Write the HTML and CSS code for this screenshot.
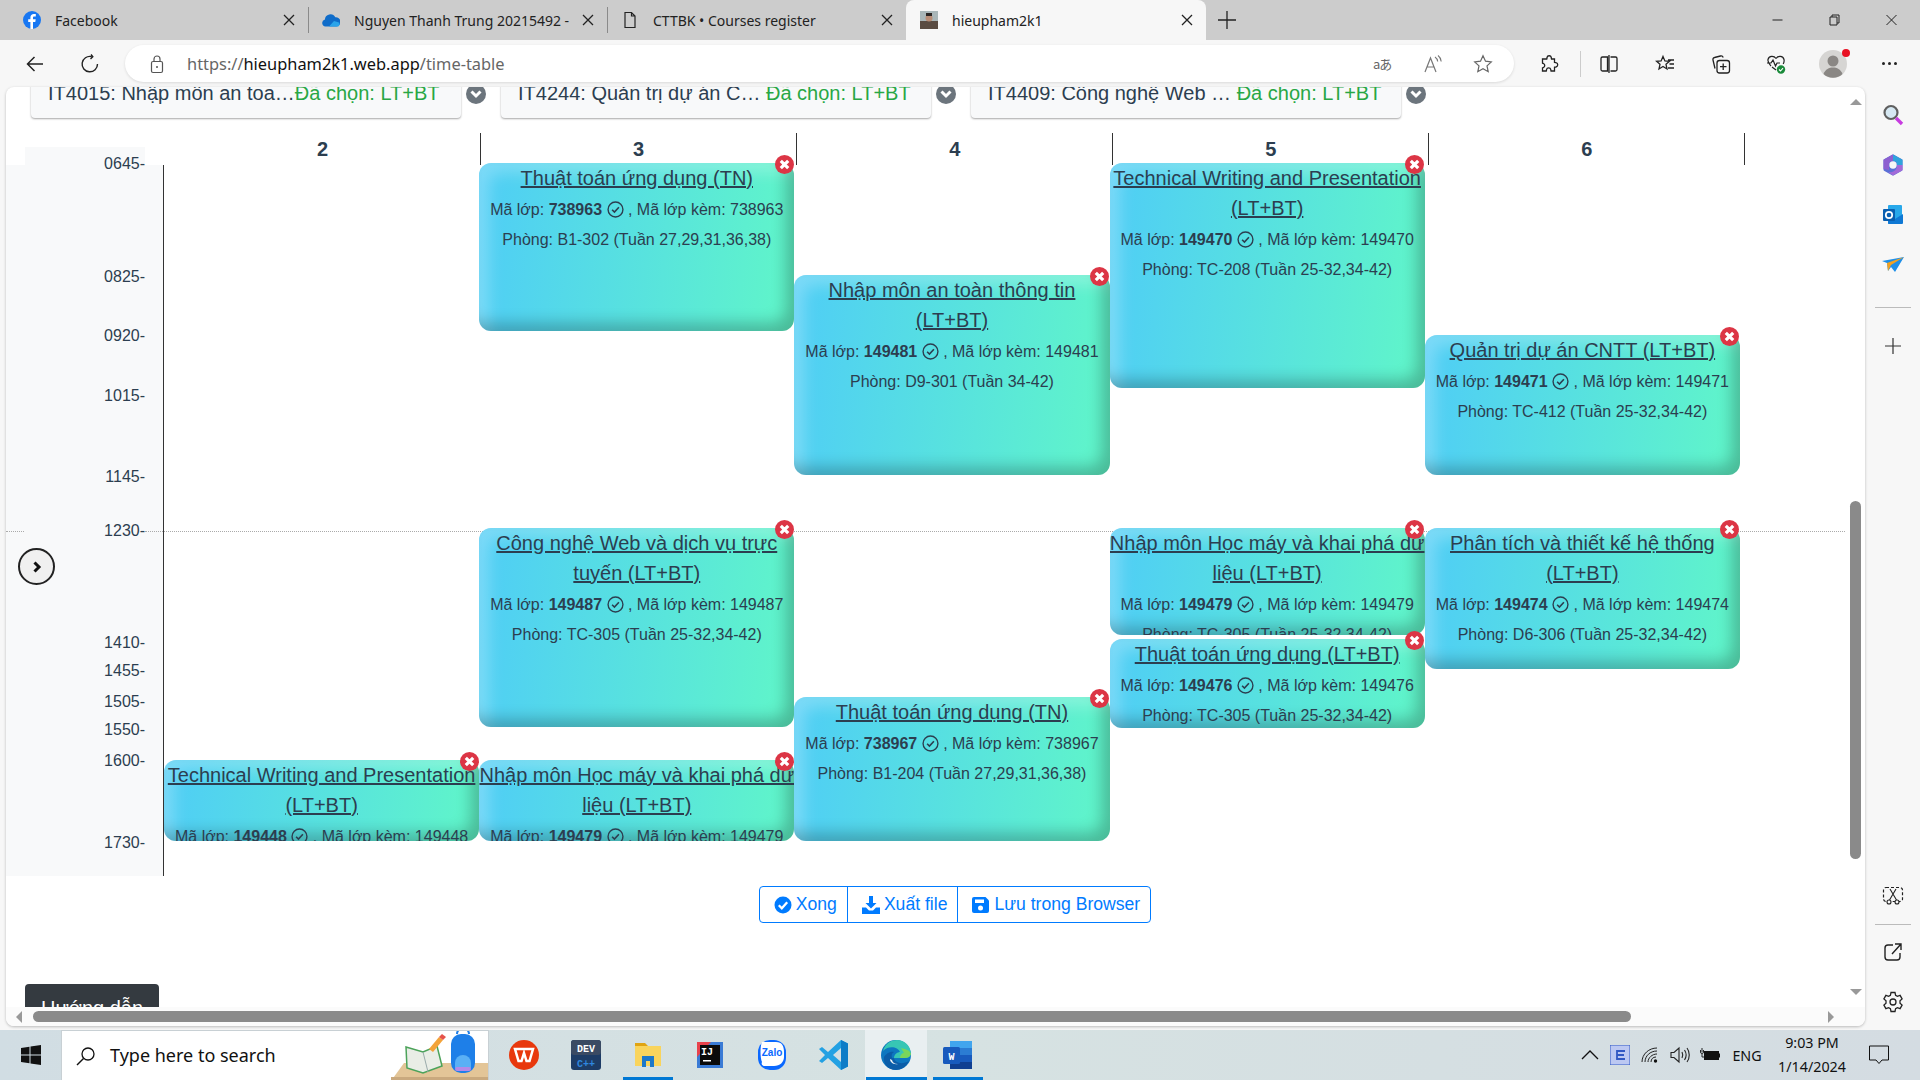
FILE: index.html
```html
<!DOCTYPE html>
<html>
<head>
    <title>hieupham2k1</title>
    <meta charset="UTF-8">
    <link rel="stylesheet" href="styles.css">
</head>
<body>
    <svg class="defs" width="0" height="0">
        <symbol id="check" viewBox="0 0 16 16">
            <circle cx="8" cy="8" r="7" fill="none" stroke="currentColor" stroke-width="1.300"/>
            <path d="M4.800 8.200l2.200 2.200 4.200-4.600" fill="none" stroke="currentColor" stroke-width="1.500"/>
        </symbol>
        <symbol id="remove" viewBox="0 0 19 19">
            <circle cx="9.500" cy="9.500" r="9.500" fill="#dc3545"/>
            <path d="M5.800 5.800l7.400 7.400M13.200 5.800l-7.400 7.400" stroke="#fff" stroke-width="3.200"/>
        </symbol>
        <symbol id="tab-x" viewBox="0 0 12 12">
            <path d="M1 1l10 10M11 1L1 11" stroke="#222" stroke-width="1.300"/>
        </symbol>
        <symbol id="chev" viewBox="0 0 20 20">
            <circle cx="10" cy="10" r="10" fill="#6c757d"/>
            <path d="M5.500 7.500L10 12l4.500-4.500" fill="none" stroke="#fff" stroke-width="3"/>
        </symbol>
    </svg>

    <div class="tabstrip">
        <div class="tab">
            <svg class="tab-icon" viewBox="0 0 18 18"><circle cx="9" cy="9" r="9" fill="#1877f2"/><path d="M10 18v-7h2.300l.4-2.700H10V6.700c0-.8.300-1.300 1.400-1.300h1.400V3c-.4 0-1.100-.1-2-.1-2 0-3.400 1.200-3.400 3.500v1.900H5.200V11h2.200v7z" fill="#fff"/></svg>
            <span class="tab-title">Facebook</span>
            <svg class="tab-close"><use href="#tab-x"/></svg>
        </div>
        <div class="tab-sep"></div>
        <div class="tab">
            <svg class="tab-icon" viewBox="0 0 18 18"><path d="M3.500 15.500a3.500 3.500 0 0 1-.6-6.900A5.500 5.500 0 0 1 13.300 6.300 4.500 4.500 0 0 1 14.500 15.500z" fill="#0f6cc9"/><path d="M7 15.500l5-5.500 5 1.500a2.500 2.500 0 0 1-2.500 4z" fill="#2aa4ea"/></svg>
            <span class="tab-title">Nguyen Thanh Trung 20215492 -</span>
            <svg class="tab-close"><use href="#tab-x"/></svg>
        </div>
        <div class="tab-sep"></div>
        <div class="tab">
            <svg class="tab-icon" viewBox="0 0 18 18"><path d="M4 1.500h6.500L14 5v11.500H4zM10.500 1.500V5H14" fill="none" stroke="#222" stroke-width="1.200"/></svg>
            <span class="tab-title">CTTBK • Courses register</span>
            <svg class="tab-close"><use href="#tab-x"/></svg>
        </div>
        <div class="tab tab-active">
            <svg class="tab-icon" viewBox="0 0 18 18"><rect width="18" height="18" fill="#a9b6b8"/><rect y="10" width="18" height="8" fill="#5a4c42"/><circle cx="9" cy="7" r="3.500" fill="#b98d76"/><rect x="6" y="2" width="6" height="3" fill="#2c2624"/></svg>
            <span class="tab-title">hieupham2k1</span>
            <svg class="tab-close"><use href="#tab-x"/></svg>
        </div>
        <svg class="tab-new" viewBox="0 0 18 18"><path d="M9 0v18M0 9h18" stroke="#222" stroke-width="1.300"/></svg>
        <div class="win-controls">
            <svg class="win-btn" viewBox="0 0 12 12"><path d="M1 6h10" stroke="#222" stroke-width="1"/></svg>
            <svg class="win-btn" viewBox="0 0 12 12"><path d="M1.500 3h7v8h-7zM3.500 3V1h7v8h-2" fill="none" stroke="#222" stroke-width="1"/></svg>
            <svg class="win-btn" viewBox="0 0 12 12"><path d="M1 1l10 10M11 1L1 11" stroke="#222" stroke-width="1"/></svg>
        </div>
    </div>

    <div class="toolbar">
        <div class="tool">
            <svg class="tool-icon" viewBox="0 0 20 20"><path d="M18 10H2.500M9.500 3l-7 7 7 7" fill="none" stroke="#222" stroke-width="1.500"/></svg>
        </div>
        <div class="tool">
            <svg class="tool-icon" viewBox="0 0 20 20"><path d="M11.500 2.600A7.700 7.700 0 1 0 17.500 10M11 .5l1.800 2.300L10.500 5" fill="none" stroke="#222" stroke-width="1.400"/></svg>
        </div>
        <div class="address">
            <svg class="addr-lock" viewBox="0 0 20 20"><rect x="4.500" y="7.500" width="11" height="11" rx="1.500" fill="none" stroke="#555" stroke-width="1.200"/><path d="M7 7.500V5a3 3 0 0 1 6 0v2.500" fill="none" stroke="#555" stroke-width="1.200"/><circle cx="10" cy="13" r="1" fill="#555"/></svg>
            <span class="url"><span class="url-dim">https://</span>hieupham2k1.web.app<span class="url-dim">/time-table</span></span>
            <div class="addr-icons">
                <div class="addr-translate">a<span class="kana">あ</span></div>
                <svg class="tool-icon" viewBox="0 0 20 20"><path d="M2 18L7.500 4 13 18M4 13h7" fill="none" stroke="#777" stroke-width="1.200"/><path d="M12 3c1.500 1 2.500 2.500 2.700 4.500M15 1.500c2 1.500 3 3.500 3.200 6" fill="none" stroke="#777" stroke-width="1.100"/></svg>
                <svg class="tool-icon" viewBox="0 0 20 20"><path d="M10 1.800l2.500 5.400 5.800.7-4.300 4 1.200 5.800L10 14.800l-5.200 2.900L6 11.900l-4.300-4 5.800-.7z" fill="none" stroke="#666" stroke-width="1.200"/></svg>
            </div>
        </div>
        <div class="tool tool-ext">
            <svg class="tool-icon" viewBox="0 0 20 20"><path d="M8 3.500a2.200 2.200 0 0 1 4.300 0c0 .6 0 1 .2 1.500h3v3.500c.5.200 1 0 1.500.2a2.200 2.200 0 0 1 0 4.300c-.5 0-1 0-1.500.2V17h-3.500c-.2-.5 0-1-.2-1.300a2.200 2.200 0 0 0-4.300 0c0 .3 0 .8-.2 1.300H3.500v-3.200c.5-.3 1-.2 1.300-.5a2.200 2.200 0 0 0 0-3.600c-.3-.3-.8-.2-1.300-.5V5h4.300c.2-.5.2-1 .2-1.500z" fill="none" stroke="#222" stroke-width="1.300"/></svg>
        </div>
        <div class="tool-divider"></div>
        <div class="tool tool-wide">
            <svg class="tool-icon" viewBox="0 0 20 20"><path d="M8.500 3H3.500a1.500 1.500 0 0 0-1.500 1.500v11A1.500 1.500 0 0 0 3.500 17h5zM11.500 3h5A1.500 1.500 0 0 1 18 4.500v11a1.500 1.500 0 0 1-1.500 1.500h-5M10 1v18" fill="none" stroke="#222" stroke-width="1.300"/></svg>
        </div>
        <div class="tool tool-wide">
            <svg class="tool-icon" viewBox="0 0 20 20"><path d="M8 2.500l1.900 4.400 4.600.4-3.500 3 1 4.700-4-2.500-4 2.500 1-4.700-3.500-3 4.600-.4zM13 6h6M14.500 10H19M13 14h6" fill="none" stroke="#222" stroke-width="1.300"/></svg>
        </div>
        <div class="tool tool-wide">
            <svg class="tool-icon" viewBox="0 0 20 20"><path d="M4 14.500L2 6c-.3-1.200.3-2.300 1.500-2.500l6-1.500c1.300-.3 2.300.3 2.700 1.500" fill="none" stroke="#222" stroke-width="1.300"/><rect x="6" y="6.500" width="12.500" height="12.500" rx="2.500" fill="none" stroke="#222" stroke-width="1.300"/><path d="M12.200 9.500v6.500M9 12.700h6.500" stroke="#222" stroke-width="1.300"/></svg>
        </div>
        <div class="tool tool-wide tool-health">
            <svg class="tool-icon" viewBox="0 0 20 20"><path d="M10 4.500C8 1.500 3 1.500 2 5.500c-.6 2.700 1 4.500 3 6.500M10 4.500c2-3 7-3 8 1 .4 1.800 0 3-.8 4.500M1 9h4l2-3 2.500 6 1.500-3h3M6 13l4 3" fill="none" stroke="#222" stroke-width="1.200"/><circle cx="15" cy="15.500" r="4.200" fill="#1a8a3a"/><path d="M13 15.500l1.500 1.500 2.500-2.800" fill="none" stroke="#fff" stroke-width="1.100"/></svg>
        </div>
        <div class="tool tool-wide">
            <div class="avatar">
                <svg class="avatar-pic" viewBox="0 0 28 28"><circle cx="14" cy="14" r="14" fill="#d6d5d3"/><circle cx="14" cy="11" r="5.500" fill="#8a8784"/><path d="M4.500 24c2-5 5.500-6.500 9.500-6.500s7.500 1.500 9.500 6.500a14 14 0 0 1-19 0z" fill="#8a8784"/></svg>
                <span class="avatar-dot"></span>
            </div>
        </div>
        <div class="tool tool-wide tool-menu">
            <span></span><span></span><span></span>
        </div>
    </div>

    <div class="main">
        <div class="page">
            <div class="page-view">
                <div class="page-scroll">
                    <div class="selects">
                        <div class="select-card">
                            <span class="select-text">IT4015: Nhập môn an toa…<span class="select-done">Đã chọn: LT+BT</span></span>
                            <svg class="select-chev"><use href="#chev"/></svg>
                        </div>
                        <div class="select-card">
                            <span class="select-text">IT4244: Quản trị dự án C… <span class="select-done">Đã chọn: LT+BT</span></span>
                            <svg class="select-chev"><use href="#chev"/></svg>
                        </div>
                        <div class="select-card">
                            <span class="select-text">IT4409: Công nghệ Web … <span class="select-done">Đã chọn: LT+BT</span></span>
                            <svg class="select-chev"><use href="#chev"/></svg>
                        </div>
                    </div>

                    <div class="day-heads">
                        <div class="day-head">2</div>
                        <div class="day-head">3</div>
                        <div class="day-head">4</div>
                        <div class="day-head">5</div>
                        <div class="day-head">6</div>
                    </div>

                    <div class="timetable">
                        <div class="noon-line noon-short"></div>
                        <div class="noon-line noon-long"></div>
                        <div class="times">
                            <span class="time" style="top:-13px">0645-</span>
                            <span class="time" style="top:100px">0825-</span>
                            <span class="time" style="top:159px">0920-</span>
                            <span class="time" style="top:219px">1015-</span>
                            <span class="time" style="top:300px">1145-</span>
                            <span class="time" style="top:354px">1230-</span>
                            <span class="time" style="top:466px">1410-</span>
                            <span class="time" style="top:494px">1455-</span>
                            <span class="time" style="top:525px">1505-</span>
                            <span class="time" style="top:553px">1550-</span>
                            <span class="time" style="top:584px">1600-</span>
                            <span class="time" style="top:666px">1730-</span>
                            <button class="side-toggle">
                                <svg class="side-toggle-icon" viewBox="0 0 12 12"><path d="M3.500 1.500L8 6l-4.500 4.500" fill="none" stroke="#111" stroke-width="3"/></svg>
                            </button>
                        </div>

                        <div class="day">
                            <div class="event" style="top:595px;height:81px">
                                <div class="event-body">
                                    <a class="event-title">Technical Writing and Presentation (LT+BT)</a>
                                    <p class="event-line">Mã lớp: <b>149448</b> <svg class="ok"><use href="#check"/></svg> , Mã lớp kèm: 149448</p>
                                </div>
                                <svg class="event-remove"><use href="#remove"/></svg>
                            </div>
                        </div>

                        <div class="day">
                            <div class="event" style="top:-2px;height:168px">
                                <div class="event-body">
                                    <a class="event-title">Thuật toán ứng dụng (TN)</a>
                                    <p class="event-line">Mã lớp: <b>738963</b> <svg class="ok"><use href="#check"/></svg> , Mã lớp kèm: 738963</p>
                                    <p class="event-line">Phòng: B1-302 (Tuần 27,29,31,36,38)</p>
                                </div>
                                <svg class="event-remove"><use href="#remove"/></svg>
                            </div>
                            <div class="event" style="top:363px;height:199px">
                                <div class="event-body">
                                    <a class="event-title">Công nghệ Web và dịch vụ trực tuyến (LT+BT)</a>
                                    <p class="event-line">Mã lớp: <b>149487</b> <svg class="ok"><use href="#check"/></svg> , Mã lớp kèm: 149487</p>
                                    <p class="event-line">Phòng: TC-305 (Tuần 25-32,34-42)</p>
                                </div>
                                <svg class="event-remove"><use href="#remove"/></svg>
                            </div>
                            <div class="event" style="top:595px;height:81px">
                                <div class="event-body">
                                    <a class="event-title">Nhập môn Học máy và khai phá dữ liệu (LT+BT)</a>
                                    <p class="event-line">Mã lớp: <b>149479</b> <svg class="ok"><use href="#check"/></svg> , Mã lớp kèm: 149479</p>
                                </div>
                                <svg class="event-remove"><use href="#remove"/></svg>
                            </div>
                        </div>

                        <div class="day">
                            <div class="event" style="top:110px;height:200px">
                                <div class="event-body">
                                    <a class="event-title">Nhập môn an toàn thông tin (LT+BT)</a>
                                    <p class="event-line">Mã lớp: <b>149481</b> <svg class="ok"><use href="#check"/></svg> , Mã lớp kèm: 149481</p>
                                    <p class="event-line">Phòng: D9-301 (Tuần 34-42)</p>
                                </div>
                                <svg class="event-remove"><use href="#remove"/></svg>
                            </div>
                            <div class="event" style="top:532px;height:144px">
                                <div class="event-body">
                                    <a class="event-title">Thuật toán ứng dụng (TN)</a>
                                    <p class="event-line">Mã lớp: <b>738967</b> <svg class="ok"><use href="#check"/></svg> , Mã lớp kèm: 738967</p>
                                    <p class="event-line">Phòng: B1-204 (Tuần 27,29,31,36,38)</p>
                                </div>
                                <svg class="event-remove"><use href="#remove"/></svg>
                            </div>
                        </div>

                        <div class="day">
                            <div class="event" style="top:-2px;height:225px">
                                <div class="event-body">
                                    <a class="event-title">Technical Writing and Presentation (LT+BT)</a>
                                    <p class="event-line">Mã lớp: <b>149470</b> <svg class="ok"><use href="#check"/></svg> , Mã lớp kèm: 149470</p>
                                    <p class="event-line">Phòng: TC-208 (Tuần 25-32,34-42)</p>
                                </div>
                                <svg class="event-remove"><use href="#remove"/></svg>
                            </div>
                            <div class="event" style="top:363px;height:107px">
                                <div class="event-body">
                                    <a class="event-title">Nhập môn Học máy và khai phá dữ liệu (LT+BT)</a>
                                    <p class="event-line">Mã lớp: <b>149479</b> <svg class="ok"><use href="#check"/></svg> , Mã lớp kèm: 149479</p>
                                    <p class="event-line">Phòng: TC-305 (Tuần 25-32,34-42)</p>
                                </div>
                                <svg class="event-remove"><use href="#remove"/></svg>
                            </div>
                            <div class="event" style="top:474px;height:89px">
                                <div class="event-body">
                                    <a class="event-title">Thuật toán ứng dụng (LT+BT)</a>
                                    <p class="event-line">Mã lớp: <b>149476</b> <svg class="ok"><use href="#check"/></svg> , Mã lớp kèm: 149476</p>
                                    <p class="event-line">Phòng: TC-305 (Tuần 25-32,34-42)</p>
                                </div>
                                <svg class="event-remove"><use href="#remove"/></svg>
                            </div>
                        </div>

                        <div class="day">
                            <div class="event" style="top:170px;height:140px">
                                <div class="event-body">
                                    <a class="event-title">Quản trị dự án CNTT (LT+BT)</a>
                                    <p class="event-line">Mã lớp: <b>149471</b> <svg class="ok"><use href="#check"/></svg> , Mã lớp kèm: 149471</p>
                                    <p class="event-line">Phòng: TC-412 (Tuần 25-32,34-42)</p>
                                </div>
                                <svg class="event-remove"><use href="#remove"/></svg>
                            </div>
                            <div class="event" style="top:363px;height:141px">
                                <div class="event-body">
                                    <a class="event-title">Phân tích và thiết kế hệ thống (LT+BT)</a>
                                    <p class="event-line">Mã lớp: <b>149474</b> <svg class="ok"><use href="#check"/></svg> , Mã lớp kèm: 149474</p>
                                    <p class="event-line">Phòng: D6-306 (Tuần 25-32,34-42)</p>
                                </div>
                                <svg class="event-remove"><use href="#remove"/></svg>
                            </div>
                        </div>
                    </div>

                    <div class="actions">
                        <div class="btn-group">
                            <button class="btn">
                                <svg class="btn-icon" viewBox="0 0 18 18"><circle cx="9" cy="9" r="8.500" fill="#007bff"/><path d="M4.800 9.300l3 3 5.400-6" fill="none" stroke="#fff" stroke-width="2.300"/></svg>
                                Xong
                            </button>
                            <button class="btn">
                                <svg class="btn-icon" viewBox="0 0 18 18"><path d="M7 0h4v7h3.500L9 12.500 3.500 7H7z" fill="#007bff"/><path d="M0 11.500h4L7 14.500h4l3-3h4V18H0z" fill="#007bff"/></svg>
                                Xuất file
                            </button>
                            <button class="btn">
                                <svg class="btn-icon" viewBox="0 0 18 18"><path d="M2 1h11.500L17 4.500V15a2 2 0 0 1-2 2H2a2 2 0 0 1-2-2V3a2 2 0 0 1 2-2z" fill="#007bff"/><rect x="3" y="3.500" width="9" height="3.500" fill="#fff"/><circle cx="8.500" cy="12" r="2.500" fill="#fff"/></svg>
                                Lưu trong Browser
                            </button>
                        </div>
                    </div>

                    <button class="guide">Hướng dẫn</button>
                </div>

                <div class="vscroll">
                    <span class="arrow-up"></span>
                    <span class="vthumb"></span>
                    <span class="arrow-down"></span>
                </div>
            </div>
            <div class="hscroll">
                <span class="arrow-left"></span>
                <span class="hthumb"></span>
                <span class="arrow-right"></span>
            </div>
        </div>

        <div class="sidebar">
            <div class="side-group">
                <div class="side-slot">
                    <svg class="side-icon" viewBox="0 0 22 22"><circle cx="9" cy="8.500" r="6.500" fill="#d6e8f2" stroke="#5f5f5f" stroke-width="2.200"/><path d="M14 14l6 6" stroke="#c73be0" stroke-width="3.400"/></svg>
                </div>
                <div class="side-slot">
                    <svg class="side-icon" viewBox="0 0 22 22"><path d="M11 1.500l8.500 4.700v9.600L11 20.500l-8.500-4.700V6.200z" fill="#5b6fd6" stroke="#5b6fd6" stroke-width="2" stroke-linejoin="round"/><path d="M11 .5l9.500 5.200V11H15a4 4 0 0 0-4-4z" fill="#2fa3dc"/><path d="M1.500 5.700L11 .5V7a4 4 0 0 0-4 4v5l-5.500-1z" fill="#8d5fd0"/><path d="M20.500 11v5.300L11 21.500 6 18c4 1 9-1 9-7z" fill="#a26ad8"/><circle cx="11" cy="11" r="3.700" fill="#f7f7f7"/></svg>
                </div>
                <div class="side-slot">
                    <svg class="side-icon" viewBox="0 0 22 22"><rect x="6" y="1" width="14" height="19" rx="1" fill="#28a8ea"/><path d="M6 11l7 4 8-5v9a1 1 0 0 1-1 1H7a1 1 0 0 1-1-1z" fill="#0f78d4"/><rect x="1" y="5" width="12" height="12" rx="1" fill="#0a5fb0"/><circle cx="7" cy="11" r="3.200" fill="none" stroke="#fff" stroke-width="1.700"/></svg>
                </div>
                <div class="side-slot">
                    <svg class="side-icon" viewBox="0 0 22 22"><path d="M0 7l22-4L13 18l-4-5-3 4-1-8z" fill="#1e8fe8"/><path d="M5 9l17-6-13 8-3 6z" fill="#f4a21f"/></svg>
                </div>
                <div class="side-sep side-sep-top"></div>
                <div class="side-slot side-plus">
                    <svg class="side-icon" viewBox="0 0 16 16"><path d="M8 0v16M0 8h16" stroke="#333" stroke-width="1.200"/></svg>
                </div>
            </div>
            <div class="side-group">
                <div class="side-slot">
                    <svg class="side-icon" viewBox="0 0 22 22"><rect x="1.500" y="2.500" width="19" height="14" rx="2.500" fill="none" stroke="#222" stroke-width="1.200" stroke-dasharray="3 2"/><path d="M8 4l6.500 11M14 4L7.500 15" stroke="#222" stroke-width="1.100"/><circle cx="7" cy="17" r="2" fill="#f7f7f7" stroke="#222" stroke-width="1.100"/><circle cx="15" cy="17" r="2" fill="#f7f7f7" stroke="#222" stroke-width="1.100"/></svg>
                </div>
                <div class="side-sep"></div>
                <div class="side-slot">
                    <svg class="side-icon" viewBox="0 0 22 22"><path d="M11 4H6a3 3 0 0 0-3 3v9a3 3 0 0 0 3 3h9a3 3 0 0 0 3-3v-4M10 13L19 3M13 3h6v6" fill="none" stroke="#222" stroke-width="1.400"/></svg>
                </div>
                <div class="side-slot">
                    <svg class="side-icon" viewBox="0 0 22 22"><path d="M9 1.500h4l.6 2.800 1.800 1 2.700-.9 2 3.500-2.100 1.900v2.400l2.100 1.900-2 3.500-2.700-.9-1.800 1-.6 2.800H9l-.6-2.800-1.800-1-2.700.9-2-3.500 2.100-1.900V9.800L1.900 7.900l2-3.500 2.700.9 1.800-1z" fill="none" stroke="#222" stroke-width="1.300"/><circle cx="11" cy="11" r="3" fill="none" stroke="#222" stroke-width="1.300"/></svg>
                </div>
            </div>
        </div>
    </div>

    <div class="taskbar">
        <div class="start">
            <svg class="start-logo" viewBox="0 0 20 20"><path d="M0 3l8.500-1.200v7.700H0zM9.500 1.600L20 0v9.500H9.500zM0 10.500h8.500v7.700L0 17zM9.500 10.500H20V20L9.500 18.400z" fill="#111"/></svg>
        </div>
        <div class="search">
            <svg class="search-icon" viewBox="0 0 20 20"><circle cx="12" cy="8" r="6" fill="none" stroke="#111" stroke-width="1.300"/><path d="M7.500 12.500L1 19" stroke="#111" stroke-width="1.500"/></svg>
            <span class="search-text">Type here to search</span>
            <svg class="search-art" viewBox="0 0 97 50">
                <path d="M13 32h84v18H0z" fill="#e3c597"/>
                <rect y="46" width="97" height="4" fill="#c9a97e"/>
                <path d="M15 16l17 5 14-6 5 20-19 7-16-5z" fill="#e9ede6" stroke="#4ca35a" stroke-width="1.500"/>
                <path d="M32 21l5 20" stroke="#9aa" stroke-width="1"/>
                <path d="M38 18l10-12 4 3-10 12z" fill="#f3a33a"/>
                <path d="M48 6l3-3 4 3-3 3z" fill="#e5534b"/>
                <path d="M66 3a6 6 0 0 1 12 0" fill="none" stroke="#1e7fe8" stroke-width="2"/>
                <rect x="60" y="3" width="24" height="39" rx="10" fill="#1e7fe8"/>
                <path d="M64 32a8 8 0 0 1 16 0v5H64z" fill="#5ab0f5"/>
                <rect x="64" y="36" width="16" height="4" rx="2" fill="#b48ae8"/>
            </svg>
        </div>
        <div class="task-icons">
            <div class="task-item">
                <svg class="task-icon" viewBox="0 0 32 32"><circle cx="16" cy="16" r="15" fill="#e8380d"/><path d="M7 10h18l-3.500 12h-3L16 14l-2.500 8h-3z" fill="none" stroke="#fff" stroke-width="2.500"/></svg>
            </div>
            <div class="task-item">
                <svg class="task-icon" viewBox="0 0 32 32"><rect x="1" y="1" width="30" height="30" rx="3" fill="#1d3c66"/><rect x="1" y="1" width="30" height="15" rx="3" fill="#3a4a63"/><text class="icon-label" x="16" y="13" fill="#fff">DEV</text><text class="icon-label" x="16" y="28" fill="#2f87df">C++</text></svg>
            </div>
            <div class="task-item task-open">
                <svg class="task-icon" viewBox="0 0 32 32"><path d="M3 4h10l3 3H3z" fill="#e0a413"/><rect x="3" y="7" width="26" height="20" fill="#f9d45c"/><path d="M10 28V17h12v11h-4v-6h-4v6z" fill="#1d78c9"/></svg>
            </div>
            <div class="task-item">
                <svg class="task-icon" viewBox="0 0 32 32"><rect x="3" y="3" width="26" height="26" fill="#3a7bd5"/><path d="M3 3h14L3 18z" fill="#e8424c"/><rect x="6" y="6" width="20" height="20" fill="#0a0a0a"/><text class="icon-label" x="13" y="16" fill="#fff">IJ</text><rect x="9" y="21" width="8" height="1.500" fill="#fff"/></svg>
            </div>
            <div class="task-item">
                <svg class="task-icon" viewBox="0 0 32 32"><rect x="2" y="1" width="28" height="30" rx="12" fill="#0a68ff"/><path d="M6 3h14c6 0 8 4 8 10v5c0 5-4 9-10 9H9c-3 0-4-2-3-4-2-4-2-16 0-20z" fill="#fff"/><text class="icon-label icon-zalo" x="16" y="17" fill="#0a68ff">Zalo</text></svg>
            </div>
            <div class="task-item">
                <svg class="task-icon" viewBox="0 0 32 32"><path d="M23 1l7 3.500v23L23 31 10 19l-6 5-3-2 6-6-6-6 3-2 6 5z" fill="#23a1e3"/><path d="M23 1l7 3.500v23L23 31z" fill="#0e7cc7"/><path d="M23 9l-8 7 8 7z" fill="#d3dfe3"/></svg>
            </div>
            <div class="task-item task-open task-active">
                <svg class="task-icon" viewBox="0 0 32 32"><circle cx="16" cy="16" r="15" fill="#0d77c0"/><path d="M3 12C5 4 12 1 17 1c7 0 13 5 14 13 0 4-3 5-6 5H14c0-4 4-6 6-6-2-5-11-7-17-1z" fill="#37c6b4"/><path d="M21 9c4 1 9 2 10 6-1 3-4 4-6 4h-5c0-3 2-5 4-5z" fill="#7ad65a"/><path d="M14 19c1 5 8 7 15 3-3 6-8 9-13 9-9 0-13-7-12-13 2-3 6-6 10-5-2 1-3 3-2 6z" fill="#0b5da8"/><path d="M12 21a6 5 0 0 0 6 4c-5 1-8-2-8-5z" fill="#e8f1f4"/></svg>
            </div>
            <div class="task-item task-open">
                <svg class="task-icon" viewBox="0 0 32 32"><rect x="8" y="2" width="22" height="28" rx="2" fill="#2b7cd3"/><rect x="8" y="2" width="22" height="7" fill="#41a5ee"/><rect x="8" y="16" width="22" height="7" fill="#185abd"/><rect x="8" y="23" width="22" height="7" fill="#103f91"/><rect x="1" y="8" width="17" height="17" rx="1.500" fill="#185abd"/><text class="icon-label" x="9.500" y="21" fill="#fff">W</text></svg>
            </div>
        </div>
        <div class="tray">
            <div class="tray-slot"><svg class="tray-icon" viewBox="0 0 18 18"><path d="M1 13l8-8 8 8" fill="none" stroke="#111" stroke-width="1.300"/></svg></div>
            <div class="tray-slot"><svg class="tray-icon tray-ime" viewBox="0 0 20 20"><rect width="20" height="20" fill="#bcc8f2" stroke="#3158c4"/><path d="M15 6H7v8h8M7 10h7" fill="none" stroke="#3158c4" stroke-width="1.800"/></svg></div>
            <div class="tray-slot"><svg class="tray-icon" viewBox="0 0 18 18"><path d="M1 16C1 8 8 2 16 2M4 16c0-6 5-11 12-11M7 16c0-4 4-8 9-8M10 16c0-3 2-5 5-5" fill="none" stroke="#222" stroke-width="1"/><circle cx="14.500" cy="15" r="1.700" fill="#111"/></svg></div>
            <div class="tray-slot"><svg class="tray-icon" viewBox="0 0 20 18"><path d="M1 6.500h3L9 2v14l-5-4.500H1z" fill="none" stroke="#222" stroke-width="1.100"/><path d="M12 6c1 2 1 4 0 6M14.500 4c2 3 2 7 0 10M17 2c3 4 3 10 0 14" fill="none" stroke="#222" stroke-width="1.100"/></svg></div>
            <div class="tray-slot"><svg class="tray-icon" viewBox="0 0 20 18"><rect x="4" y="5" width="15" height="9" fill="#111"/><rect x="19" y="7.500" width="1" height="4" fill="#111"/><path d="M2 2v4M0.500 4v2a1.500 1.500 0 0 0 3 0V4M2 8v3h2" fill="none" stroke="#111" stroke-width=".9"/></svg></div>
            <div class="tray-lang">ENG</div>
            <div class="tray-clock"><span>9:03 PM</span><span>1/14/2024</span></div>
            <div class="tray-notify"><svg class="notify-icon" viewBox="0 0 20 20"><path d="M.5 1h19v14H13l-3 3.500L7 15H.5z" fill="none" stroke="#111" stroke-width="1"/></svg></div>
        </div>
    </div>
</body>
</html>
```

FILE: styles.css
```css
* {
    box-sizing: border-box;
}
html, body {
    margin: 0;
    height: 100%;
}
body {
    width: 1920px;
    height: 1080px;
    display: flex;
    flex-direction: column;
    overflow: hidden;
    background: #f7f7f7;
    font-family: 'Liberation Sans', Arial, sans-serif;
    color: #2c3e50;
}
.defs {
    position: absolute;
}

/* browser tabs */
.tabstrip {
    height: 40px;
    flex: none;
    display: flex;
    align-items: center;
    padding-left: 10px;
    background: #cccccc;
    font-family: 'Noto Sans', sans-serif;
    font-size: 14px;
    color: #222;
}
.tab {
    width: 298px;
    height: 40px;
    display: flex;
    align-items: center;
    padding: 0 13px;
}
.tab-sep {
    width: 1px;
    height: 26px;
    background: #8a8a8a;
}
.tab-active {
    width: 300px;
    margin-left: 0;
    padding-left: 14px;
    background: #f7f7f7;
    border-radius: 8px 8px 0 0;
}
.tab-icon {
    width: 18px;
    height: 18px;
    margin-right: 14px;
    flex: none;
}
.tab-title {
    flex: 1;
    white-space: nowrap;
    overflow: hidden;
}
.tab-close {
    width: 12px;
    height: 12px;
    flex: none;
}
.tab-new {
    width: 18px;
    height: 18px;
    margin-left: 12px;
}
.win-controls {
    margin-left: auto;
    display: flex;
}
.win-btn {
    width: 57px;
    height: 12px;
}

/* address bar row */
.toolbar {
    height: 47px;
    flex: none;
    display: flex;
    align-items: center;
    padding-left: 13px;
    background: #f7f7f7;
}
.tool {
    width: 44px;
    height: 36px;
    margin-right: 11px;
    flex: none;
    display: flex;
    align-items: center;
    justify-content: center;
}
.tool-icon {
    width: 20px;
    height: 20px;
}
.address {
    width: 1389px;
    height: 37px;
    margin-left: 2px;
    flex: none;
    display: flex;
    align-items: center;
    padding: 0 21px 0 22px;
    background: #fff;
    border-radius: 19px;
    box-shadow: 0 1px 3px rgba(0, 0, 0, 0.12);
}
.addr-lock {
    width: 20px;
    height: 20px;
    margin-right: 20px;
}
.url {
    flex: 1;
    font-family: 'Noto Sans', sans-serif;
    font-size: 16.400px;
    color: #111;
}
.url-dim {
    color: #666;
}
.addr-icons {
    display: flex;
    align-items: center;
    gap: 30px;
}
.addr-translate {
    width: 20px;
    font-family: 'Noto Sans CJK JP', 'Noto Sans', sans-serif;
    font-size: 13px;
    white-space: nowrap;
    color: #666;
}
.kana {
    margin-left: -1px;
}
.tool-ext {
    width: 56px;
    margin: 0 0 0 7px;
}
.tool-divider {
    width: 1px;
    height: 26px;
    margin-left: 3px;
    background: #ccc;
}
.tool-wide {
    width: 56px;
    margin: 0;
}
.tool-health {
    padding-right: 3px;
}
.avatar {
    position: relative;
    width: 28px;
    height: 28px;
}
.avatar-pic {
    width: 28px;
    height: 28px;
    display: block;
}
.avatar-dot {
    position: absolute;
    top: -1px;
    right: -3px;
    width: 8px;
    height: 8px;
    border-radius: 50%;
    background: #e81123;
}
.tool-menu {
    gap: 3px;
}
.tool-menu span {
    width: 3px;
    height: 3px;
    border-radius: 50%;
    background: #222;
}

/* page area */
.main {
    flex: 1;
    min-height: 0;
    display: flex;
    padding-left: 6px;
}
.page {
    width: 1859px;
    height: 939px;
    display: flex;
    flex-direction: column;
    background: #fff;
    border-radius: 8px;
    overflow: hidden;
    box-shadow: 0 1px 3px rgba(0, 0, 0, 0.25);
}
.page-view {
    height: 920px;
    display: flex;
}
.page-scroll {
    width: 1840px;
    height: 920px;
    overflow: hidden;
}
.selects {
    height: 31px;
    display: flex;
    gap: 40px;
    padding-left: 25px;
}
.select-card {
    position: relative;
    width: 430px;
    height: 51px;
    margin-top: -20px;
    padding: 12px 0 0 17px;
    line-height: 28px;
    font-size: 20px;
    white-space: nowrap;
    background: #f8f9fa;
    border-radius: 4px;
    box-shadow: 0 1px 2px rgba(0, 0, 0, 0.35);
}
.select-done {
    color: #28a745;
}
.select-chev {
    position: absolute;
    top: 17px;
    right: -25px;
    width: 20px;
    height: 20px;
}
.day-heads {
    height: 32px;
    margin-top: 15px;
    padding-left: 159px;
    display: flex;
}
.day-head {
    width: 316.100px;
    border-right: 1px solid #333;
    text-align: center;
    font-size: 20px;
    font-weight: bold;
    line-height: 32px;
}
.timetable {
    position: relative;
    height: 711px;
    display: flex;
}
.times {
    position: relative;
    width: 158px;
    flex: none;
    background: #f8f9fa;
    border-right: 1px solid #333;
}
.times::before {
    content: "";
    position: absolute;
    top: -18px;
    left: 19px;
    width: 120px;
    height: 18px;
    background: #f8f9fa;
}
.time {
    position: absolute;
    right: 18px;
    line-height: 24px;
    font-size: 16px;
}
.side-toggle {
    position: absolute;
    top: 383px;
    left: 12px;
    width: 37px;
    height: 37px;
    padding: 0;
    display: flex;
    align-items: center;
    justify-content: center;
    background: #f0f0f0;
    border: 2px solid #222;
    border-radius: 50%;
}
.side-toggle-icon {
    width: 12px;
    height: 12px;
}
.noon-line {
    position: absolute;
    z-index: 1;
    top: 366px;
    border-top: 1px dotted #aaa;
}
.noon-short {
    left: 0;
    width: 18px;
}
.noon-long {
    left: 139px;
    right: -1px;
}
.day {
    position: relative;
    width: 315.200px;
    flex: none;
}
.event {
    position: absolute;
    z-index: 2;
    left: 0;
    width: 100%;
}
.event-body {
    height: 100%;
    overflow: hidden;
    text-align: center;
    line-height: 30px;
    border-radius: 12px;
    background: linear-gradient(95deg, #4fcdf6 0%, #60f6c8 100%);
    box-shadow: inset -10px -10px 15px -2px rgba(0, 0, 0, 0.24), inset 10px 10px 15px rgba(255, 255, 255, 0.25);
}
.event-title {
    display: block;
    margin-bottom: 2px;
    font-size: 20px;
    text-decoration: underline;
}
.event-line {
    margin: 0;
    font-size: 16px;
    white-space: nowrap;
}
.ok {
    width: 17px;
    height: 17px;
    vertical-align: -3px;
}
.event-remove {
    position: absolute;
    top: -8px;
    right: 0.500px;
    width: 19px;
    height: 19px;
}

/* buttons under the table */
.actions {
    width: 1741px;
    padding: 10px 0 0 157px;
    display: flex;
    justify-content: center;
}
.btn-group {
    display: flex;
    height: 37px;
    border: 1px solid #007bff;
    border-radius: 4px;
}
.btn {
    display: flex;
    align-items: center;
    gap: 4px;
    padding: 0 10px 0 14px;
    font: inherit;
    font-size: 17.600px;
    color: #007bff;
    background: none;
    border: none;
    border-right: 1px solid #007bff;
}
.btn:last-child {
    border-right: none;
}
.btn-icon {
    width: 18px;
    height: 18px;
}
.guide {
    display: block;
    width: 134px;
    height: 48px;
    margin: 61px 0 0 19px;
    font: inherit;
    font-size: 20px;
    color: #fff;
    background: #343a40;
    border: none;
    border-radius: 4px;
}

/* fake scrollbars */
.vscroll {
    width: 19px;
    flex: none;
    display: flex;
    flex-direction: column;
    align-items: center;
    padding-top: 12px;
}
.arrow-up {
    width: 0;
    height: 0;
    border: 6px solid transparent;
    border-top: none;
    border-bottom: 6px solid #999;
}
.vthumb {
    width: 11px;
    height: 358px;
    margin-top: 396px;
    border-radius: 6px;
    background: #8a8a8a;
}
.arrow-down {
    width: 0;
    height: 0;
    margin-top: 130px;
    border: 6px solid transparent;
    border-bottom: none;
    border-top: 6px solid #999;
}
.hscroll {
    height: 19px;
    flex: none;
    display: flex;
    align-items: center;
    padding-left: 10px;
    background: #fbfbfb;
}
.arrow-left {
    width: 0;
    height: 0;
    border: 6px solid transparent;
    border-left: none;
    border-right: 6px solid #999;
}
.hthumb {
    width: 1598px;
    height: 11px;
    margin-left: 11px;
    border-radius: 6px;
    background: #8a8a8a;
}
.arrow-right {
    width: 0;
    height: 0;
    margin-left: 197px;
    border: 6px solid transparent;
    border-right: none;
    border-left: 6px solid #999;
}

/* edge sidebar */
.sidebar {
    flex: 1;
    display: flex;
    flex-direction: column;
    justify-content: space-between;
    padding-top: 3px;
    margin-bottom: -1px;
}
.side-group {
    display: flex;
    flex-direction: column;
    align-items: center;
}
.side-slot {
    height: 50px;
    display: flex;
    align-items: center;
}
.side-icon {
    width: 22px;
    height: 22px;
}
.side-plus {
    margin-top: 13px;
}
.side-plus .side-icon {
    width: 16px;
    height: 16px;
}
.side-sep {
    width: 36px;
    height: 1px;
    margin: 3px 0 2px;
    background: #bbb;
}
.side-sep-top {
    margin: 17px 0 0;
}

/* windows taskbar */
.taskbar {
    height: 50px;
    margin-top: 4px;
    flex: none;
    display: flex;
    background: linear-gradient(90deg, #d1dde3, #d6e2e2 50%, #d4dce2);
    font-family: 'Noto Sans', sans-serif;
    color: #111;
}
.start {
    width: 61px;
    flex: none;
    display: flex;
    align-items: center;
    justify-content: center;
}
.start-logo {
    width: 20px;
    height: 20px;
}
.search {
    width: 428px;
    flex: none;
    display: flex;
    align-items: center;
    padding-left: 14px;
    background: #fff;
    border: 1px solid #c8d0d4;
    border-bottom: none;
}
.search-icon {
    width: 20px;
    height: 20px;
    margin-right: 14px;
}
.search-text {
    flex: 1;
    padding-bottom: 2px;
    font-size: 18px;
}
.search-art {
    width: 97px;
    height: 50px;
}
.task-icons {
    display: flex;
    margin-left: 4px;
}
.task-item {
    position: relative;
    width: 62px;
    display: flex;
    align-items: center;
    justify-content: center;
}
.task-open::after {
    content: "";
    position: absolute;
    left: 6px;
    right: 6px;
    bottom: 0;
    height: 3px;
    background: #0078d4;
}
.task-active {
    background: #e9eff1;
}
.task-active::after {
    left: 1px;
    right: 0;
}
.task-icon {
    width: 32px;
    height: 32px;
}
.icon-label {
    font-family: 'Liberation Mono', monospace;
    font-size: 10px;
    font-weight: bold;
    text-anchor: middle;
}
.icon-zalo {
    font-family: 'Liberation Sans', sans-serif;
}
.tray {
    margin-left: auto;
    display: flex;
    align-items: center;
    padding-right: 17px;
    font-size: 14.300px;
}
.tray-slot {
    width: 30px;
    display: flex;
    justify-content: center;
}
.tray-icon {
    width: 20px;
    height: 18px;
}
.tray-ime {
    height: 20px;
}
.tray-lang {
    width: 44px;
    text-align: center;
}
.tray-clock {
    width: 86px;
    display: flex;
    flex-direction: column;
    align-items: center;
    line-height: 24px;
}
.tray-notify {
    width: 48px;
    display: flex;
    justify-content: center;
}
.notify-icon {
    width: 20px;
    height: 20px;
}
```
